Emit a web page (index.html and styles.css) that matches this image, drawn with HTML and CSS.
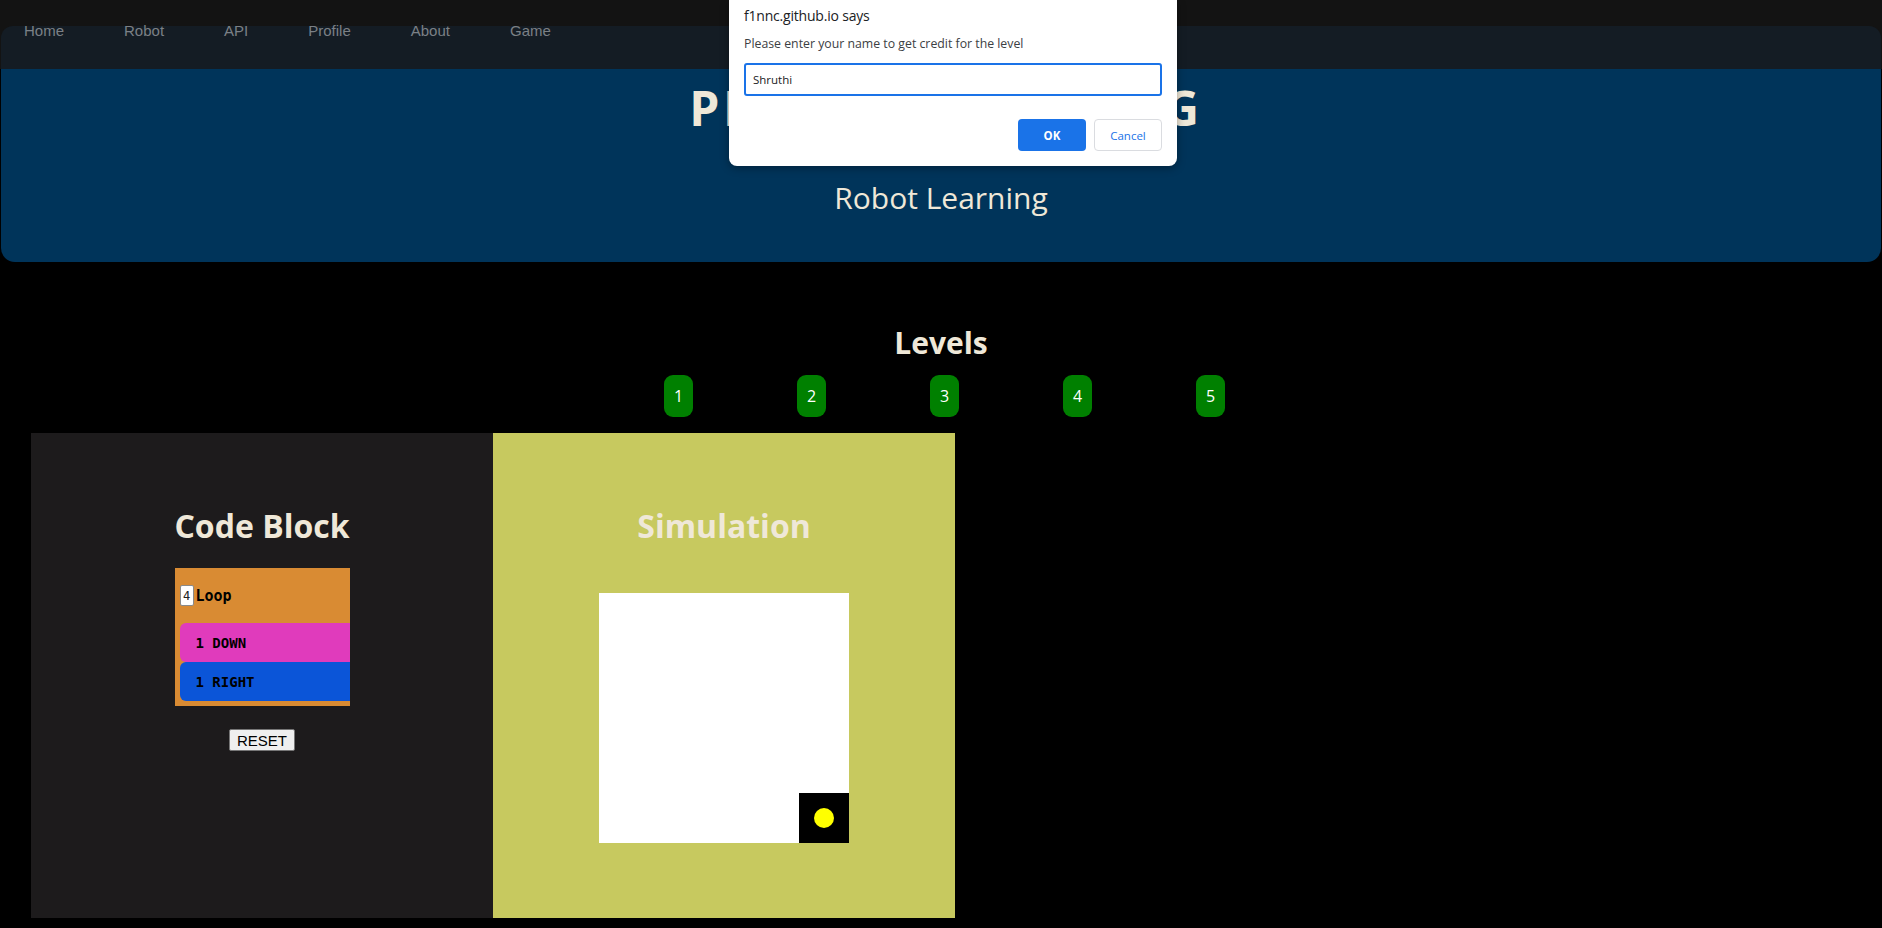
FILE: index.html
```html
<!DOCTYPE html>
<html lang="en">
<head>
<meta charset="utf-8">
<title>Game</title>
<link rel="stylesheet" href="styles.css">
</head>
<body>
<div class="top-wrap">
  <nav class="navbar">
    <ul class="nav-list">
      <li><a href="#">Home</a></li>
      <li><a href="#">Robot</a></li>
      <li><a href="#">API</a></li>
      <li><a href="#">Profile</a></li>
      <li><a href="#">About</a></li>
      <li><a href="#">Game</a></li>
    </ul>
  </nav>
</div>
<header class="hero">
  <h1 class="hero-title">PROBLEM SOLVING</h1>
  <p class="hero-sub">Robot Learning</p>
</header>

<section class="levels">
  <h2 class="levels-title">Levels</h2>
  <div class="level-row">
    <button class="level-btn">1</button>
    <button class="level-btn">2</button>
    <button class="level-btn">3</button>
    <button class="level-btn">4</button>
    <button class="level-btn">5</button>
  </div>
</section>

<main class="workspace">
  <section class="panel code-panel">
    <h2 class="panel-title">Code Block</h2>
    <div class="loop-block">
      <div class="loop-head">
        <input class="loop-count" type="text" value="4">
        <span class="loop-label">Loop</span>
      </div>
      <div class="cmd cmd-down">1 DOWN</div>
      <div class="cmd cmd-right">1 RIGHT</div>
    </div>
    <button class="reset-btn">RESET</button>
  </section>
  <section class="panel sim-panel">
    <h2 class="panel-title">Simulation</h2>
    <div class="grid">
      <div class="cell"></div><div class="cell"></div><div class="cell"></div><div class="cell"></div><div class="cell"></div>
      <div class="cell"></div><div class="cell"></div><div class="cell"></div><div class="cell"></div><div class="cell"></div>
      <div class="cell"></div><div class="cell"></div><div class="cell"></div><div class="cell"></div><div class="cell"></div>
      <div class="cell"></div><div class="cell"></div><div class="cell"></div><div class="cell"></div><div class="cell"></div>
      <div class="cell"></div><div class="cell"></div><div class="cell"></div><div class="cell"></div><div class="cell robot"><span class="bot"></span></div>
    </div>
  </section>
</main>

<div class="dialog">
  <div class="dialog-title">f1nnc.github.io says</div>
  <div class="dialog-msg">Please enter your name to get credit for the level</div>
  <input class="dialog-input" type="text" value="Shruthi">
  <div class="dialog-actions">
    <button class="btn-ok">OK</button>
    <button class="btn-cancel">Cancel</button>
  </div>
</div>
</body>
</html>
```

FILE: styles.css
```css
* { box-sizing: border-box; }

html, body {
  margin: 0;
  padding: 0;
  background: #000;
  font-family: "Open Sans", "Noto Sans", sans-serif;
}

body {
  position: relative;
  height: 928px;
  overflow: hidden;
}

.top-wrap {
  background: #131313;
  padding-top: 26px;
}

.navbar {
  display: flow-root;
  margin: 0 1px;
  height: 43px;
  background: #141c24;
  border-radius: 12px 12px 0 0;
}

.nav-list {
  list-style: none;
  margin: -4px 0 0 0;
  padding: 0 0 0 23px;
  display: flex;
  gap: 60px;
  font-family: "Liberation Sans", Arial, sans-serif;
  font-size: 15px;
}

.nav-list a {
  color: #7b8086;
  text-decoration: none;
}

.hero {
  margin: 0 1px;
  background: #00345a;
  border-radius: 0 0 14px 14px;
  padding: 6px 0 44px;
  text-align: center;
  color: #efe8d8;
}

.hero-title {
  margin: 0;
  padding-left: 10px;
  font-size: 48px;
  font-weight: 700;
  letter-spacing: 3.8px;
  line-height: 65px;
}

.hero-sub {
  margin: 37px 0 0;
  font-size: 30px;
  line-height: 41px;
}

.levels {
  text-align: center;
  padding-top: 60px;
}

.levels-title {
  margin: 0;
  color: #efe8d8;
  font-size: 30px;
  font-weight: 700;
  line-height: 41px;
}

.level-row {
  margin-top: 12px;
  display: flex;
  justify-content: center;
  gap: 104px;
  padding-left: 7px;
}

.level-btn {
  width: 29px;
  height: 42px;
  border: 0;
  border-radius: 9px;
  background: #008000;
  color: #fff;
  font-family: "Open Sans", sans-serif;
  font-size: 16px;
  padding: 0;
}

.workspace {
  margin: 16px 0 0 31px;
  display: flex;
}

.panel {
  width: 462px;
  height: 485px;
  display: flex;
  flex-direction: column;
  align-items: center;
  padding-top: 71px;
}

.code-panel { background: #1d1b1c; }
.sim-panel { background: #c7c95f; }

.panel-title {
  margin: 0;
  color: #efe8d8;
  font-size: 32px;
  font-weight: 700;
  line-height: 44px;
}

.loop-block {
  margin-top: 20px;
  width: 175px;
  background: #d98b33;
  padding: 0 0 5px 5px;
  overflow: hidden;
}

.loop-head {
  height: 55px;
  display: flex;
  align-items: center;
}

.loop-count {
  width: 14px;
  height: 21px;
  padding: 0;
  border: 1px solid #8a8a8a;
  border-radius: 2px;
  background: #fff;
  font-family: "DejaVu Sans Mono", monospace;
  font-size: 12px;
  text-align: center;
  color: #222;
}

.loop-label {
  margin-left: 2px;
  font-family: "DejaVu Sans Mono", monospace;
  font-weight: 700;
  font-size: 15px;
  color: #000;
}

.cmd {
  height: 39px;
  display: flex;
  align-items: center;
  padding-left: 16px;
  border-radius: 6px 0 0 6px;
  font-family: "DejaVu Sans Mono", monospace;
  font-weight: 700;
  font-size: 14px;
  color: #000;
}

.cmd-down { background: #e03bbc; }
.cmd-right { background: #0b55d8; }

.reset-btn {
  margin-top: 23px;
  width: 66px;
  height: 22px;
  padding: 0;
  border: 1px solid #767676;
  border-radius: 2px;
  background: #efefef;
  font-family: "Liberation Sans", Arial, sans-serif;
  font-size: 15px;
  color: #000;
}

.grid {
  margin-top: 45px;
  display: grid;
  grid-template-columns: repeat(5, 50px);
  grid-template-rows: repeat(5, 50px);
  background: #fff;
}

.cell { background: #fff; }

.cell.robot {
  background: #000;
  display: flex;
  align-items: center;
  justify-content: center;
}

.bot {
  width: 20px;
  height: 20px;
  border-radius: 50%;
  background: #ffff00;
}

/* browser prompt dialog overlay */
.dialog {
  position: absolute;
  top: 0;
  left: 729px;
  width: 448px;
  height: 166px;
  background: #fff;
  border-radius: 0 0 8px 8px;
  box-shadow: 0 2px 8px rgba(0, 0, 0, 0.35);
  padding: 6px 16px 0 15px;
  font-family: "Open Sans", "Noto Sans", sans-serif;
  color: #202124;
}

.dialog-title {
  font-size: 14px;
  line-height: 20px;
  letter-spacing: -0.2px;
}

.dialog-msg {
  margin-top: 10px;
  font-size: 12.3px;
  line-height: 16px;
  color: #3c4043;
}

.dialog-input {
  display: block;
  margin-top: 11px;
  width: 418px;
  height: 33px;
  border: 2px solid #1a73e8;
  border-radius: 3px;
  padding: 0 0 0 7px;
  font-family: "Open Sans", sans-serif;
  font-size: 11.5px;
  color: #202124;
  outline: none;
}

.dialog-actions {
  margin-top: 23px;
  display: flex;
  justify-content: flex-end;
  gap: 8px;
  width: 418px;
}

.btn-ok, .btn-cancel {
  width: 68px;
  height: 32px;
  border-radius: 4px;
  font-family: "Open Sans", sans-serif;
  font-size: 11.5px;
  padding: 0;
}

.btn-ok {
  background: #1a73e8;
  border: 0;
  color: #fff;
  font-weight: 700;
}

.btn-cancel {
  background: #fff;
  border: 1px solid #dadce0;
  color: #1a73e8;
}
```
